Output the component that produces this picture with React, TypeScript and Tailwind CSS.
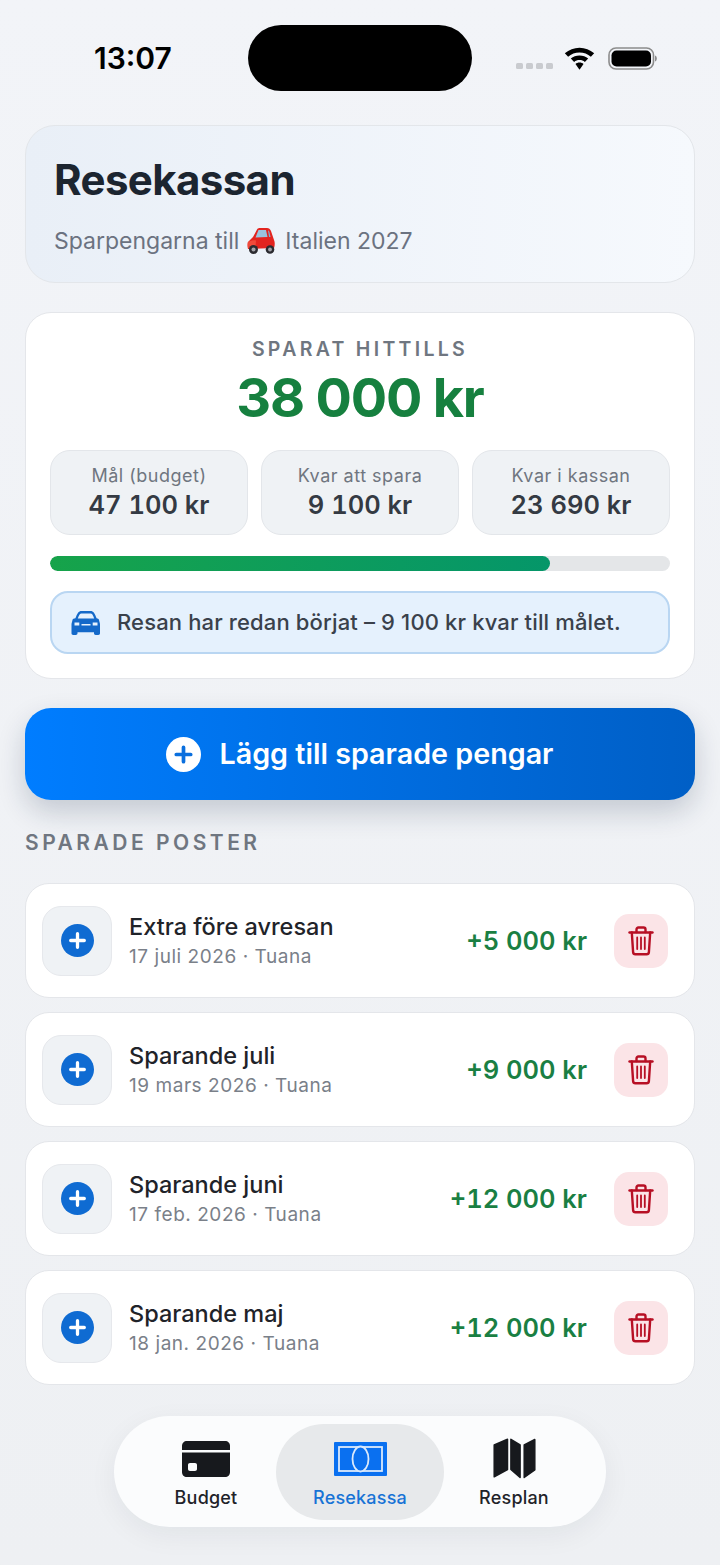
import React from "react";

const PlusCircle = ({ size, bg, fg, sw }: { size: number; bg: string; fg: string; sw: number }) => (
  <svg width={size} height={size} viewBox="0 0 34 34" className="shrink-0">
    <circle cx="17" cy="17" r="17" fill={bg} />
    <path d="M17 10v14M10 17h14" stroke={fg} strokeWidth={sw} strokeLinecap="round" />
  </svg>
);

const Trash = () => (
  <svg width="26" height="30" viewBox="0 0 26 30" fill="none" stroke="#b70f24" strokeWidth="2.4" strokeLinecap="round" strokeLinejoin="round">
    <path d="M1.5 6.5h23" />
    <path d="M8.5 6V3.4C8.5 2.3 9.3 1.5 10.4 1.5h5.2c1.1 0 1.9.8 1.9 1.9V6" />
    <path d="M3.8 6.5l1.3 19.6c.1 1.3 1 2.2 2.3 2.2h11.2c1.3 0 2.2-.9 2.3-2.2l1.3-19.6" />
    <path d="M9.2 11.5v11.5M13 11.5v11.5M16.8 11.5v11.5" strokeWidth="1.8" />
  </svg>
);

const CarFront = () => (
  <svg width="30" height="24" viewBox="0 0 30 24" className="shrink-0">
    <path
      fill="#1469c9"
      fillRule="evenodd"
      d="M7.2 1.5C8 .6 9 0 10.5 0h9c1.5 0 2.5.6 3.3 1.5 1 1.400 2 3.600 2.800 5.800l1.500.5c.5.1.9.6.9 1.200l.5 2c.3.8.5 1.700.5 2.500v8.800c0 .9-.7 1.700-1.700 1.700h-2.600c-1 0-1.700-.8-1.700-1.700v-1H6.500v1c0 .9-.7 1.700-1.700 1.700H2.200c-1 0-1.700-.8-1.700-1.700v-8.800c0-.8.2-1.700.5-2.500l.5-2c0-.6.4-1.100.9-1.200l2-.5c.8-2.200 1.800-4.400 2.800-5.800zM8.800 3.200C8 4.300 7.300 6 6.800 7.500h16.400c-.5-1.500-1.200-3.200-2-4.300-.4-.5-.8-.8-1.500-.8h-9.400c-.7 0-1.100.3-1.500.8zM3.500 11.500v3h4.800v-3zM21.700 11.500v3h4.800v-3zM10.500 13v1.600h9V13z"
    />
  </svg>
);

const CarEmoji = () => (
  <svg width="30" height="28" viewBox="0 0 30 28" className="ml-[7px] mr-[9px] shrink-0">
    <path d="M7 10 L11 2.5 C11.5 1.5 12.5 1 14 1 L21 1 C23 1 24 2 25 4 L28 13 C29 15 29 18 28 21 L2 22 C1 18 1.5 15 3 14 Z" fill="#e3241f" />
    <path d="M12.5 3 L20 3 L21.5 10 L9.5 10.5 Z" fill="#9ac4de" />
    <path d="M22 3.5 C23 3.5 23.5 4.5 24.5 10 L23 10 Z" fill="#7eb0cf" />
    <path d="M1.8 15 C5 13.5 8 13 10 13.5 L9.5 20.5 L2 21 Z" fill="#f04a3a" />
    <circle cx="7.5" cy="22.5" r="4.5" fill="#2b2b30" />
    <circle cx="7.5" cy="22.5" r="2" fill="#a4a4aa" />
    <circle cx="24" cy="22.5" r="4.3" fill="#2b2b30" />
    <circle cx="24" cy="22.5" r="1.9" fill="#a4a4aa" />
  </svg>
);

const Stat = ({ label, value }: { label: string; value: string }) => (
  <div className="flex h-[85px] flex-col items-center rounded-[20px] border border-[#e3e6ea] bg-[#eff2f5] pt-[14px]">
    <div className="text-[18px] leading-[22px] tracking-[0.5px] text-[#6f7680]">{label}</div>
    <div className="mt-[1px] text-[25.5px] leading-[33px] font-semibold text-[#343a43] tabular-nums">{value}</div>
  </div>
);

const Row = ({ title, meta, amount }: { title: string; meta: string; amount: string }) => (
  <div className="flex h-[115px] items-center rounded-[24px] border border-[#e4e6ea] bg-white pl-[16px] pr-[26px]">
    <div className="flex h-[70px] w-[70px] items-center justify-center rounded-[19px] border border-[#e6e8ec] bg-[#eff2f5]">
      <PlusCircle size={33} bg="#0f6bd2" fg="#ffffff" sw={3.4} />
    </div>
    <div className="ml-[17px] flex flex-col pt-[1px]">
      <div className="text-[23.5px] leading-[29px] font-medium text-[#1f2329]">{title}</div>
      <div className="mt-[3px] text-[19px] leading-[26px] tracking-[0.55px] text-[#7a8089]">{meta}</div>
    </div>
    <div className="ml-auto pt-[2px] text-[25.5px] font-semibold text-[#1a7f43] tabular-nums">{amount}</div>
    <div className="ml-[27px] flex h-[54px] w-[54px] items-center justify-center rounded-[15px] bg-[#fbe4e7]">
      <Trash />
    </div>
  </div>
);

const NavItem = ({ label, active, icon }: { label: string; active?: boolean; icon: React.ReactNode }) => (
  <div
    className={`flex h-[96px] shrink-0 flex-col items-center rounded-[48px] pt-[15px] ${
      active ? "mx-[5px] w-[168px] bg-[#e7e9eb]" : "w-[130px]"
    }`}
  >
    <div className="flex h-[40px] items-center">{icon}</div>
    <div className={`mt-[7px] text-[18px] leading-[24px] font-medium tracking-[0.2px] ${active ? "text-[#1773d6]" : "text-[#1f2329]"}`}>{label}</div>
  </div>
);

export default function App() {
  return (
    <div className="h-[1565px] w-[720px] overflow-hidden bg-linear-to-b from-[#f2f4f8] to-[#eef0f3] font-['Inter',sans-serif]">
      <div className="flex h-[125px] items-start">
        <div className="w-[248px] pl-[94px] pt-[39px] text-[30px] leading-[38px] font-semibold text-black">13:07</div>
        <div className="mt-[25px] h-[66px] w-[224px] rounded-[33px] bg-black" />
        <div className="ml-[44px] flex items-start pt-[47px]">
          <div className="mt-[16px] flex gap-[3px]">
            <span className="h-[6px] w-[7px] rounded-[1.5px] bg-[#c9cbcf]" />
            <span className="h-[6px] w-[7px] rounded-[1.5px] bg-[#c9cbcf]" />
            <span className="h-[6px] w-[7px] rounded-[1.5px] bg-[#c9cbcf]" />
            <span className="h-[6px] w-[7px] rounded-[1.5px] bg-[#c9cbcf]" />
          </div>
          <svg width="31" height="24" viewBox="0 0 30 22" className="ml-[11px]">
            <path d="M15 0C9.5 0 5 2 .8 5.5l3.2 3.3C7 6.2 10.8 4.7 15 4.700s8 1.500 11 4.100l3.200-3.300C25 2 20.500 0 15 0z" fill="#000" />
            <path d="M15 7.5c-3.3 0-6.100 1.100-8.400 3.100l3.200 3.200c1.400-1.200 3.200-1.800 5.200-1.800s3.800.6 5.200 1.800l3.200-3.200c-2.300-2-5.100-3.100-8.400-3.100z" fill="#000" />
            <path d="M15 14.5c-1.6 0-2.900.5-3.900 1.400L15 21.500l3.900-5.600c-1-.9-2.300-1.400-3.900-1.400z" fill="#000" />
          </svg>
          <svg width="49" height="23" viewBox="0 0 49 23" className="ml-[13px]">
            <rect x="1" y="1" width="44.5" height="21" rx="7" fill="none" stroke="#8c8c8c" strokeWidth="1.6" />
            <rect x="3.5" y="3.5" width="39.5" height="16" rx="5" fill="#000" />
            <path d="M47 8.5c1.200.4 1.800 1.500 1.800 3s-.6 2.600-1.800 3z" fill="#8c8c8c" />
          </svg>
        </div>
      </div>

      <div className="flex flex-col px-[25px]">
        <div className="flex h-[158px] flex-col rounded-[30px] border border-[#e3e6ea] bg-linear-to-r from-[#e9eff7] to-[#f6f9fd] px-[28px] pt-[27px]">
          <h1 className="text-[42px] leading-[54px] font-bold tracking-[-0.6px] text-[#1c2530]">Resekassan</h1>
          <div className="mt-[19px] flex items-center text-[23px] leading-[30px] text-[#6b7280]">
            <span>Sparpengarna till</span>
            <CarEmoji />
            <span>Italien 2027</span>
          </div>
        </div>

        <div className="mt-[29px] flex h-[367px] flex-col rounded-[26px] border border-[#e4e6ea] bg-white px-[24px]">
          <div className="mt-[24px] text-center text-[19.5px] leading-[24px] font-semibold tracking-[3.3px] text-[#6f7680]">SPARAT HITTILLS</div>
          <div className="mt-[5px] text-center text-[54px] leading-[64px] font-bold tracking-[-1.2px] text-[#16803f]">38 000 kr</div>
          <div className="mt-[20px] grid grid-cols-3 gap-[13px]">
            <Stat label="Mål (budget)" value="47 100 kr" />
            <Stat label="Kvar att spara" value="9 100 kr" />
            <Stat label="Kvar i kassan" value="23 690 kr" />
          </div>
          <div className="mt-[21px] h-[15px] overflow-hidden rounded-full bg-[#e4e6e8]">
            <div className="h-full w-[500px] rounded-full bg-linear-to-r from-[#16a34a] to-[#059669]" />
          </div>
          <div className="mt-[20px] flex h-[63px] items-center rounded-[18px] border-2 border-[#b9d6f2] bg-[#e5f1fd] pl-[19px]">
            <CarFront />
            <span className="ml-[16px] text-[22px] font-medium tracking-[0.14px] text-[#3a414b]">Resan har redan börjat – 9 100 kr kvar till målet.</span>
          </div>
        </div>

        <div className="mt-[29px] flex h-[92px] items-center justify-center gap-[18px] rounded-[26px] bg-linear-to-r from-[#007dff] to-[#005fc6] shadow-[0_12px_28px_rgba(20,40,70,0.2)]">
          <PlusCircle size={35} bg="#ffffff" fg="#0a6fde" sw={3.6} />
          <span className="text-[28.7px] font-semibold text-white">Lägg till sparade pengar</span>
        </div>

        <div className="mt-[30px] text-[21px] leading-[26px] font-semibold tracking-[3.5px] text-[#6f7680]">SPARADE POSTER</div>

        <div className="mt-[27px] flex flex-col gap-[14px]">
          <Row title="Extra före avresan" meta="17 juli 2026 · Tuana" amount="+5 000 kr" />
          <Row title="Sparande juli" meta="19 mars 2026 · Tuana" amount="+9 000 kr" />
          <Row title="Sparande juni" meta="17 feb. 2026 · Tuana" amount="+12 000 kr" />
          <Row title="Sparande maj" meta="18 jan. 2026 · Tuana" amount="+12 000 kr" />
        </div>
      </div>

      <div className="mt-[31px] flex justify-center">
        <div className="flex h-[111px] w-[492px] items-center justify-center rounded-[56px] bg-[#fbfcfd] shadow-[0_8px_28px_rgba(20,30,50,0.06)]">
          <NavItem
            label="Budget"
            icon={
              <svg width="48" height="36" viewBox="0 0 48 36">
                <path d="M0 9V5c0-3 2-5 5-5h38c3 0 5 2 5 5v4z" fill="#17191d" />
                <path
                  fillRule="evenodd"
                  d="M0 11.500h48V31c0 3-2 5-5 5H5c-3 0-5-2-5-5zM8 22c-1.200 0-2 .8-2 2v4c0 1.200.8 2 2 2h5c1.200 0 2-.8 2-2v-4c0-1.200-.8-2-2-2z"
                  fill="#17191d"
                />
              </svg>
            }
          />
          <NavItem
            label="Resekassa"
            active
            icon={
              <svg width="53" height="34" viewBox="0 0 53 34">
                <rect width="53" height="34" rx="1" fill="#0a70f0" />
                <rect x="5" y="5" width="43" height="24" fill="none" stroke="#dbe9fb" strokeWidth="1.8" />
                <ellipse cx="26.5" cy="17" rx="8" ry="12.5" fill="#0a70f0" stroke="#dbe9fb" strokeWidth="1.8" />
              </svg>
            }
          />
          <NavItem
            label="Resplan"
            icon={
              <svg width="43" height="41" viewBox="-0.5 -0.5 43 41">
                <g fill="#17191d" stroke="#17191d" strokeWidth="1.5" strokeLinejoin="round">
                  <path d="M.7 6.5L14 .8v30.200L.7 38.300z" />
                  <path d="M17.400.8L26.600 6.500v32.500L17.400 31z" />
                  <path d="M30.700 6.500L41.300 1v30.500L30.700 39z" />
                </g>
              </svg>
            }
          />
        </div>
      </div>
    </div>
  );
}
